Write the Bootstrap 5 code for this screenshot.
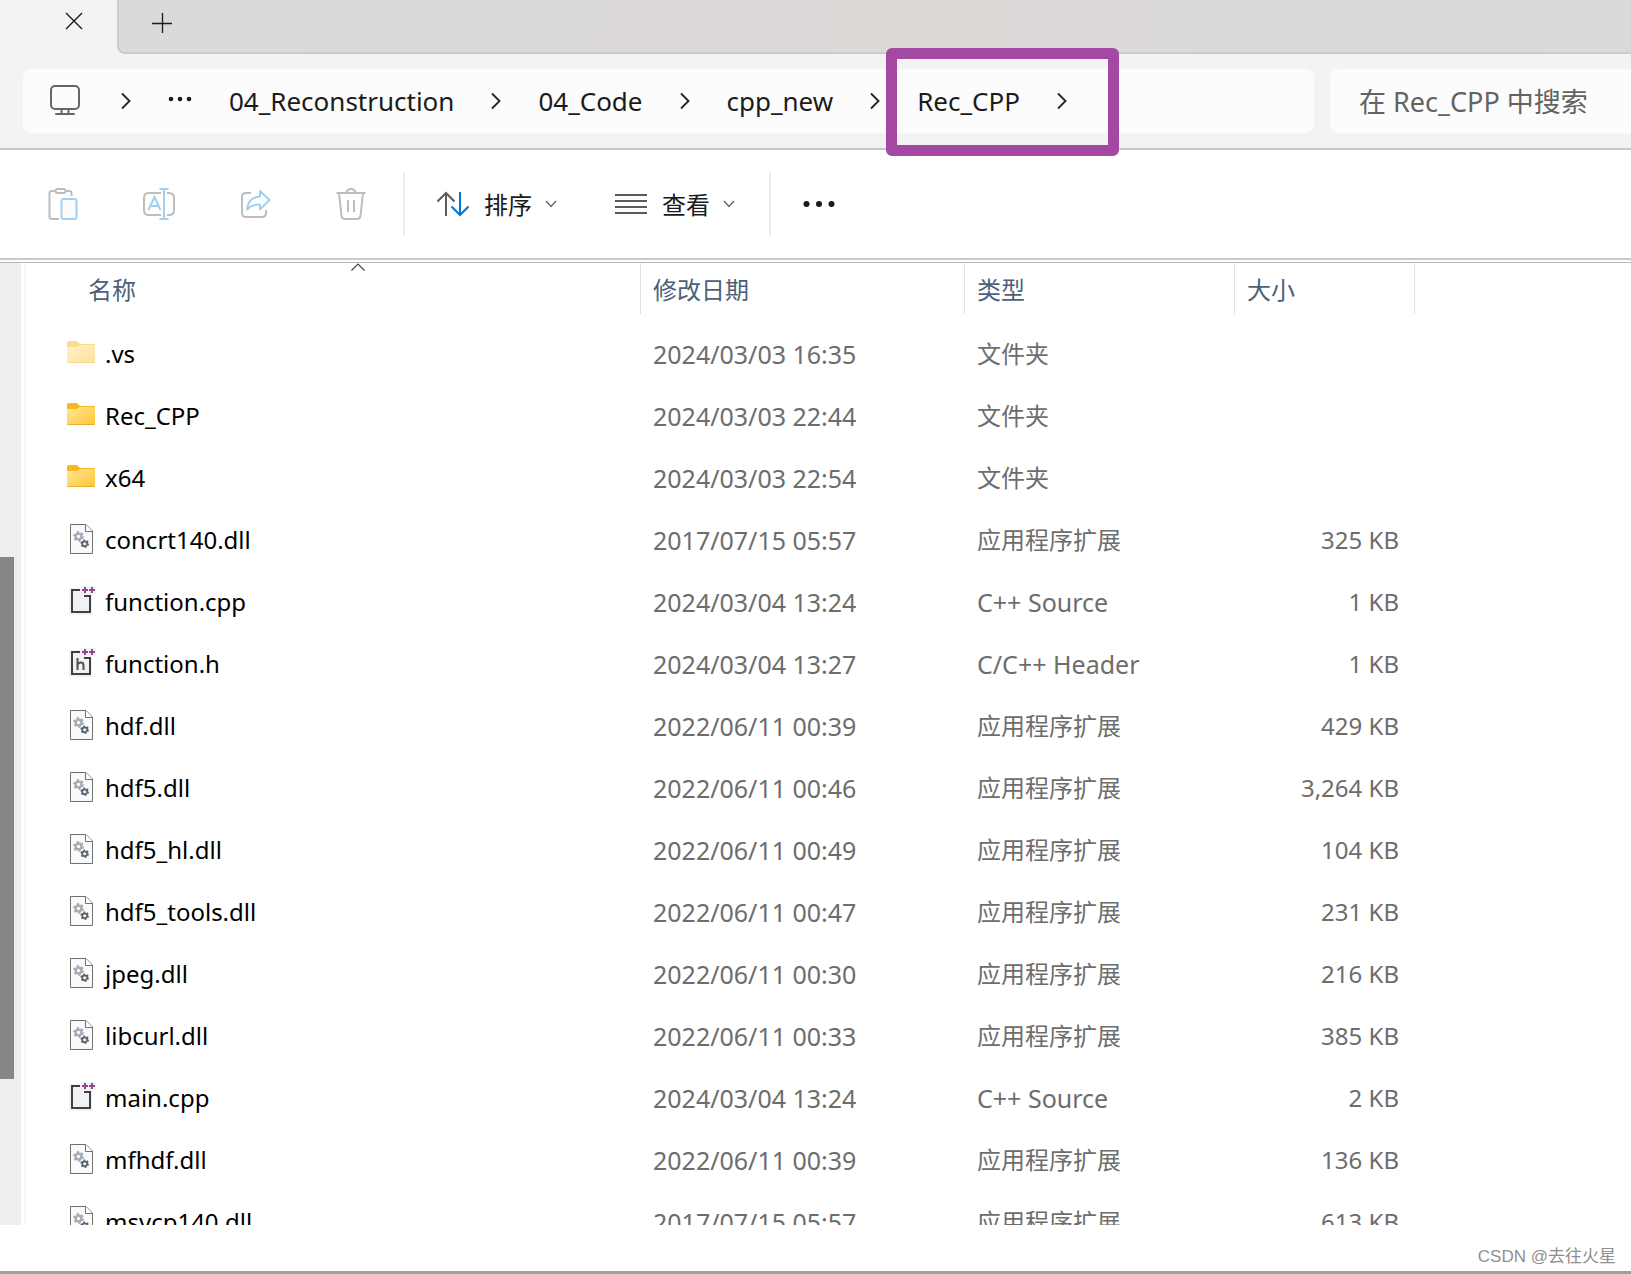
<!DOCTYPE html>
<html lang="zh-CN">
<head>
<meta charset="utf-8">
<meta name="viewport" content="width=device-width, initial-scale=1">
<title>Rec_CPP</title>
<link href="https://cdn.jsdelivr.net/npm/bootstrap@5.3.0/dist/css/bootstrap.min.css" rel="stylesheet">
<style>
  body { font-family: "Noto Sans", "Noto Sans CJK SC", sans-serif; font-size: 24px; line-height: 32px; color: #1b1b1b; background: #fff; }
  button { color: inherit; }
  svg { display: block; flex: none; }
  .plain-btn { background: none; border: 0; padding: 0; }

  /* tab strip */
  .tab-strip { height: 54px; background: #f3f3f3; }
  .active-tab { width: 117px; padding: 0 34px 12px; }
  .strip-rest { padding: 0 33px 6px; border-left: 2px solid #cbcbcb; border-bottom: 2px solid #cdcaca; border-bottom-left-radius: 8px;
    background: linear-gradient(100deg, #d9dad9 0%, #d9dad9 12%, #dbd8da 18%, #dcd8d9 36%, #ded9d7 50%, #dcd9d9 68%, #dad8da 85%, #d9dbdb 100%); }

  /* address bar */
  .address-row { padding: 15px 0 15px 23px; gap: 16px; border-bottom: 2px solid #c9c7c7; background: #f3f3f3; }
  .address-box { height: 64px; background: #fcfcfc; border-radius: 8px; padding: 0 27px; }
  .crumbs { font-size: 26px; gap: 37px; }
  .crumbs a { color: #1b1b1b; text-decoration: none; }
  .crumbs li { gap: 37px; }
  .crumb-mark { position: absolute; left: -31px; right: -52px; top: -37px; bottom: -39px; border: 11px solid #a349a4; border-radius: 6px; pointer-events: none; }
  .search-box { width: 301px; height: 64px; border: 0; border-radius: 8px 0 0 8px; background: #fcfcfc; padding: 0 0 0 29px; font-size: 27px; }
  .search-box::placeholder { color: #636363; opacity: 1; }

  /* command bar */
  .command-bar { height: 110px; border-bottom: 2px solid #cdc9c9; padding: 0 15px 0 15px; }
  .tool-btn { width: 96px; height: 64px; }
  .tool-split { width: 2px; height: 64px; background: #ececec; }
  .menu-group { gap: 58px; padding: 0 34px 0 32px; }
  .menu-group button { gap: 13px; }
  .menu-group button span { padding: 2px 0 0 2px; }

  /* file list */
  .file-area { border-top: 1px solid #b9b9b9; margin-top: 2px; flex: 1 1 0; min-height: 0; overflow: hidden; }
  .nav-scroll { width: 21px; background: #efefef; padding-top: 294px; flex: none; }
  .nav-thumb { width: 14px; height: 522px; background: #868686; }
  .nav-edge { width: 2px; margin-left: 3px; background: #f6f6f6; flex: none; }
  .file-table { table-layout: fixed; width: 1389px; color: #6d6d6d; }
  .file-table th { height: 60px; padding: 0; font-weight: 400; vertical-align: top; color: #4c607a; }
  .head-btn { width: 100%; height: 51px; padding: 2px 0 0 12px; border-right: 1px solid #e2e2e2; text-align: left; }
  .col-name { width: 615px; } .col-date { width: 324px; } .col-type { width: 270px; } .col-size { width: 180px; }
  th.name-head { padding-left: 50px; }
  .sort-caret { position: absolute; top: 0; left: 50%; margin-left: -7px; }
  .file-table td { height: 62px; padding: 0 0 0 12px; vertical-align: middle; white-space: nowrap; }
  .file-table td:first-child { padding-left: 39px; color: #000; }
  .file-table td:nth-child(2), .file-table td.latin-type { font-size: 25px; }
  .file-table td:last-child { padding-right: 16px; text-align: right; }
  .file-name { gap: 8px; }

  .page-foot { height: 49px; border-bottom: 3px solid #a0a0a0; padding: 18px 15px 0 0; font-size: 17px; line-height: 28px; color: #8f8f8f; font-family: "Liberation Sans", "Noto Sans CJK SC", sans-serif; }
</style>
<script src="https://cdn.jsdelivr.net/npm/bootstrap@5.3.0/dist/js/bootstrap.bundle.min.js"></script>
</head>
<body>
<svg width="0" height="0" class="position-absolute" aria-hidden="true">
  <defs>
    <linearGradient id="g-folder" x1="0" y1="0" x2="1" y2="1"><stop offset="0" stop-color="#ffe69a"/><stop offset="1" stop-color="#fdc734"/></linearGradient>
    <symbol id="i-folder" viewBox="0 0 32 32">
      <path d="M2 4.500Q2 3 3.500 3H11Q12 3 13 4L15 6H29Q30 6 30 7V23H2Z" fill="#f9b61d"/>
      <path d="M2 9H12L15 7H30V24Q30 25 29 25H3Q2 25 2 24Z" fill="url(#g-folder)"/>
      <path d="M2.500 24.500H29.500" stroke="#e8ac2f"/>
    </symbol>
    <symbol id="i-dll" viewBox="0 0 32 32">
      <path d="M5.500.5H21L27.500 7V29.500H5.500Z" fill="#fafafa" stroke="#707070"/>
      <path d="M20.500.5V7.500H27.500" fill="#fff" stroke="#707070"/>
      <circle cx="13.500" cy="12.500" r="2.900" fill="none" stroke="#a2adb8" stroke-width="2.400"/>
      <circle cx="13.500" cy="12.500" r="4.500" fill="none" stroke="#a2adb8" stroke-width="1.800" stroke-dasharray="2.350 2.362"/>
      <circle cx="19.700" cy="19.700" r="2.400" fill="none" stroke="#566069" stroke-width="1.700"/>
      <circle cx="19.700" cy="19.700" r="3.600" fill="none" stroke="#566069" stroke-width="1.400" stroke-dasharray="1.880 1.890"/>
    </symbol>
    <symbol id="i-cpp" viewBox="0 0 32 32">
      <path d="M4 2H16V0H31V8H27V29H4Z" fill="#f2f2f4"/>
      <path d="M15 4H7V26H25V10H19" fill="none" stroke="#404043" stroke-width="2"/>
      <path d="M17 4H23M20 1V7M24 4H30M27 1V7" stroke="#95458f" stroke-width="2"/>
    </symbol>
    <symbol id="i-hdr" viewBox="0 0 32 32">
      <use href="#i-cpp"/>
      <path d="M12.500 10V22M12.500 17Q13 14.500 16 14.500Q18.500 14.500 18.500 17.500V22" fill="none" stroke="#505055" stroke-width="2"/>
    </symbol>
    <symbol id="i-next" viewBox="0 0 10 18"><path d="M1 1.500L8.500 9L1 16.500" fill="none" stroke="#262626" stroke-width="1.900"/></symbol>
    <symbol id="i-down" viewBox="0 0 12 8"><path d="M1 1L6 6.500L11 1" fill="none" stroke="#666" stroke-width="1.300"/></symbol>
  </defs>
</svg>

<div class="d-flex flex-column vh-100 overflow-hidden">
  <div class="tab-strip d-flex">
    <div class="active-tab d-flex align-items-center justify-content-end">
      <button class="plain-btn" aria-label="关闭标签页"><svg width="18" height="18" viewBox="0 0 18 18"><path d="M1 1L17 17M17 1L1 17" stroke="#1b1b1b" stroke-width="1.400"/></svg></button>
    </div>
    <div class="strip-rest flex-grow-1 d-flex align-items-center">
      <button class="plain-btn" aria-label="新建标签页"><svg width="20" height="20" viewBox="0 0 20 20"><path d="M0 10.500H20M10.500 0V20" stroke="#1b1b1b" stroke-width="1.300"/></svg></button>
    </div>
  </div>

  <div class="address-row d-flex">
    <nav class="address-box flex-grow-1 d-flex align-items-center" aria-label="路径">
      <ol class="crumbs list-unstyled d-flex align-items-center mb-0 text-nowrap">
        <li class="d-flex align-items-center"><a href="#" aria-label="此电脑"><svg width="30" height="32" viewBox="0 0 30 32"><rect x="1" y="1" width="28" height="23" rx="4" fill="none" stroke="#666" stroke-width="2"/><path d="M11.500 24V29M18.500 24V29M6 29H24" fill="none" stroke="#666" stroke-width="2" stroke-linecap="round"/></svg></a></li>
        <li class="d-flex align-items-center ps-1"><svg width="10" height="18"><use href="#i-next"/></svg><button class="plain-btn" aria-label="更多"><svg width="24" height="10" viewBox="0 0 24 10"><g fill="#1b1b1b"><circle cx="3" cy="3" r="2.300"/><circle cx="12" cy="3" r="2.300"/><circle cx="21" cy="3" r="2.300"/></g></svg></button></li>
        <li class="d-flex align-items-center"><a href="#">04_Reconstruction</a><svg width="10" height="18"><use href="#i-next"/></svg></li>
        <li class="d-flex align-items-center"><a href="#">04_Code</a><svg width="10" height="18"><use href="#i-next"/></svg></li>
        <li class="d-flex align-items-center"><a href="#">cpp_new</a><svg width="10" height="18"><use href="#i-next"/></svg></li>
        <li class="d-flex align-items-center position-relative"><a href="#">Rec_CPP</a><svg width="10" height="18"><use href="#i-next"/></svg><span class="crumb-mark"></span></li>
      </ol>
    </nav>
    <input class="search-box" type="search" placeholder="在 Rec_CPP 中搜索" aria-label="搜索">
  </div>

  <div class="command-bar d-flex align-items-center" role="toolbar" aria-label="命令">
    <button class="plain-btn tool-btn d-flex align-items-center justify-content-center" aria-label="粘贴"><svg width="32" height="32" viewBox="0 0 32 32" fill="none" stroke-width="2"><path d="M8 3H4.500Q2.500 3 2.500 5V29Q2.500 31 4.500 31H12M19 3H22.500Q24.500 3 24.500 5V8" stroke="#bdbdbd"/><rect x="8.500" y="1" width="10" height="4" rx="2" stroke="#bdbdbd"/><rect x="14.500" y="11" width="15" height="20" rx="2" stroke="#a3cff0" fill="#fcfcfc"/></svg></button>
    <button class="plain-btn tool-btn d-flex align-items-center justify-content-center" aria-label="重命名"><svg width="32" height="32" viewBox="0 0 32 32" fill="none" stroke-width="2"><path d="M18 5H6Q1 5 1 10V22Q1 27 6 27H18M24 5H26Q31 5 31 10V22Q31 27 26 27H24" stroke="#bdbdbd"/><path d="M21 1V31M16.500 1H25.500M16.500 31H25.500M5.500 22L11.500 9L17.500 22M7.500 18H15.500" stroke="#a3cff0"/></svg></button>
    <button class="plain-btn tool-btn d-flex align-items-center justify-content-center" aria-label="共享"><svg width="32" height="32" viewBox="0 0 32 32" fill="none" stroke-width="2"><path d="M12 5H7Q3 5 3 9V25Q3 29 7 29H23Q27 29 27 25V22" stroke="#bdbdbd"/><path d="M21 3L30.500 12L21 21.500V16.500Q13 16 8 21.500Q9 9.500 21 8.500Z" stroke="#a3cff0" stroke-linejoin="round"/></svg></button>
    <button class="plain-btn tool-btn d-flex align-items-center justify-content-center" aria-label="删除"><svg width="32" height="32" viewBox="0 0 32 32" fill="none" stroke="#bdbdbd" stroke-width="2"><path d="M1.500 5H30.500M11.500 5Q12 1 16 1Q20 1 20.500 5M4 5L6.500 28Q7 31 10 31H22Q25 31 25.500 28L28 5M13 12V24M19 12V24"/></svg></button>
    <div class="tool-split ms-1"></div>
    <div class="menu-group d-flex align-items-center">
      <button class="plain-btn d-flex align-items-center" aria-haspopup="true"><svg width="32" height="32" viewBox="0 0 32 32" fill="none" stroke-width="2"><path d="M9 28V5M.5 13.500L9 5L17.500 13.500" stroke="#5b5b5b"/><path d="M23 4V27M14.500 18.500L23 27L31.500 18.500" stroke="#0078d4"/></svg><span>排序</span><svg width="12" height="8"><use href="#i-down"/></svg></button>
      <button class="plain-btn d-flex align-items-center" aria-haspopup="true"><svg width="32" height="32" viewBox="0 0 32 32"><path d="M0 7H32M0 13H32M0 19H32M0 25H32" stroke="#5b5b5b" stroke-width="2"/></svg><span>查看</span><svg width="12" height="8"><use href="#i-down"/></svg></button>
    </div>
    <div class="tool-split"></div>
    <button class="plain-btn ms-3 ps-3" aria-label="查看更多"><svg width="32" height="8" viewBox="0 0 32 8"><g fill="#1b1b1b"><circle cx="3.500" cy="4" r="3"/><circle cx="16" cy="4" r="3"/><circle cx="28.500" cy="4" r="3"/></g></svg></button>
  </div>

  <main class="file-area d-flex">
    <div class="nav-scroll"><div class="nav-thumb"></div></div>
    <div class="nav-edge"></div>
    <div class="flex-grow-1 overflow-hidden">
      <table class="file-table">
        <colgroup><col class="col-name"><col class="col-date"><col class="col-type"><col class="col-size"></colgroup>
        <thead><tr>
          <th class="name-head" scope="col" aria-sort="ascending"><button class="plain-btn head-btn position-relative">名称<svg class="sort-caret" width="14" height="8" viewBox="0 0 14 8"><path d="M.5 7.500L7 1L13.500 7.500" fill="none" stroke="#444" stroke-width="1.200"/></svg></button></th>
          <th scope="col"><button class="plain-btn head-btn">修改日期</button></th>
          <th scope="col"><button class="plain-btn head-btn">类型</button></th>
          <th scope="col"><button class="plain-btn head-btn">大小</button></th>
        </tr></thead>
        <tbody>
          <tr><td><div class="file-name d-flex align-items-center"><svg class="opacity-50" width="32" height="32"><use href="#i-folder"/></svg>.vs</div></td><td>2024/03/03 16:35</td><td>文件夹</td><td></td></tr>
          <tr><td><div class="file-name d-flex align-items-center"><svg width="32" height="32"><use href="#i-folder"/></svg>Rec_CPP</div></td><td>2024/03/03 22:44</td><td>文件夹</td><td></td></tr>
          <tr><td><div class="file-name d-flex align-items-center"><svg width="32" height="32"><use href="#i-folder"/></svg>x64</div></td><td>2024/03/03 22:54</td><td>文件夹</td><td></td></tr>
          <tr><td><div class="file-name d-flex align-items-center"><svg width="32" height="32"><use href="#i-dll"/></svg>concrt140.dll</div></td><td>2017/07/15 05:57</td><td>应用程序扩展</td><td>325 KB</td></tr>
          <tr><td><div class="file-name d-flex align-items-center"><svg width="32" height="32"><use href="#i-cpp"/></svg>function.cpp</div></td><td>2024/03/04 13:24</td><td class="latin-type">C++ Source</td><td>1 KB</td></tr>
          <tr><td><div class="file-name d-flex align-items-center"><svg width="32" height="32"><use href="#i-hdr"/></svg>function.h</div></td><td>2024/03/04 13:27</td><td class="latin-type">C/C++ Header</td><td>1 KB</td></tr>
          <tr><td><div class="file-name d-flex align-items-center"><svg width="32" height="32"><use href="#i-dll"/></svg>hdf.dll</div></td><td>2022/06/11 00:39</td><td>应用程序扩展</td><td>429 KB</td></tr>
          <tr><td><div class="file-name d-flex align-items-center"><svg width="32" height="32"><use href="#i-dll"/></svg>hdf5.dll</div></td><td>2022/06/11 00:46</td><td>应用程序扩展</td><td>3,264 KB</td></tr>
          <tr><td><div class="file-name d-flex align-items-center"><svg width="32" height="32"><use href="#i-dll"/></svg>hdf5_hl.dll</div></td><td>2022/06/11 00:49</td><td>应用程序扩展</td><td>104 KB</td></tr>
          <tr><td><div class="file-name d-flex align-items-center"><svg width="32" height="32"><use href="#i-dll"/></svg>hdf5_tools.dll</div></td><td>2022/06/11 00:47</td><td>应用程序扩展</td><td>231 KB</td></tr>
          <tr><td><div class="file-name d-flex align-items-center"><svg width="32" height="32"><use href="#i-dll"/></svg>jpeg.dll</div></td><td>2022/06/11 00:30</td><td>应用程序扩展</td><td>216 KB</td></tr>
          <tr><td><div class="file-name d-flex align-items-center"><svg width="32" height="32"><use href="#i-dll"/></svg>libcurl.dll</div></td><td>2022/06/11 00:33</td><td>应用程序扩展</td><td>385 KB</td></tr>
          <tr><td><div class="file-name d-flex align-items-center"><svg width="32" height="32"><use href="#i-cpp"/></svg>main.cpp</div></td><td>2024/03/04 13:24</td><td class="latin-type">C++ Source</td><td>2 KB</td></tr>
          <tr><td><div class="file-name d-flex align-items-center"><svg width="32" height="32"><use href="#i-dll"/></svg>mfhdf.dll</div></td><td>2022/06/11 00:39</td><td>应用程序扩展</td><td>136 KB</td></tr>
          <tr><td><div class="file-name d-flex align-items-center"><svg width="32" height="32"><use href="#i-dll"/></svg>msvcp140.dll</div></td><td>2017/07/15 05:57</td><td>应用程序扩展</td><td>613 KB</td></tr>
        </tbody>
      </table>
    </div>
  </main>
  <footer class="page-foot text-end">CSDN @去往火星</footer>
</div>
</body>
</html>
